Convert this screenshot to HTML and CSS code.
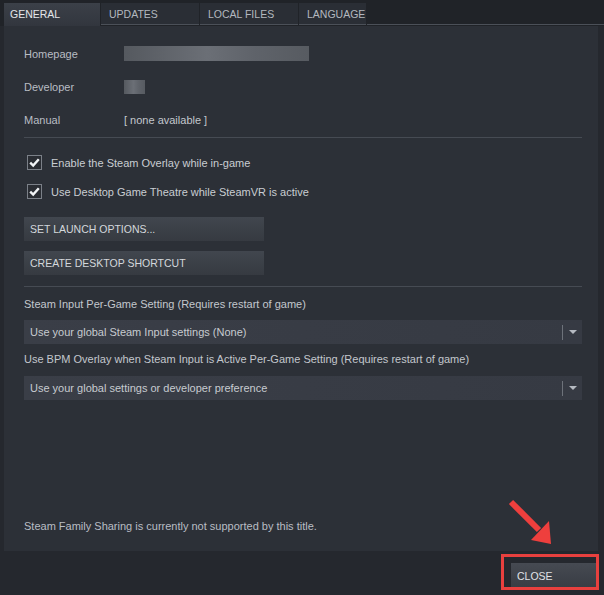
FILE: index.html
```html
<!DOCTYPE html>
<html>
<head>
<meta charset="utf-8">
<link rel="stylesheet" href="styles.css">
</head>
<body>
<div class="tabs">
  <div class="tab active">GENERAL</div>
  <div class="tab">UPDATES</div>
  <div class="tab">LOCAL FILES</div>
  <div class="tab last">LANGUAGE</div>
  <div class="tab-fill"></div>
</div>
<div class="panel">
  <div class="info">
    <div class="row"><span class="label">Homepage</span><span class="blur wide"></span></div>
    <div class="row"><span class="label">Developer</span><span class="blur small"></span></div>
    <div class="row"><span class="label">Manual</span><span class="value">[ none available ]</span></div>
  </div>
  <div class="divider"></div>
  <div class="checks">
    <label class="check"><span class="box"><svg viewBox="0 0 15 15" width="15" height="15"><path d="M3.2 7.6 L6.2 10.6 L11.8 4.2" fill="none" stroke="#f2f4f6" stroke-width="2.4"/></svg></span>Enable the Steam Overlay while in-game</label>
    <label class="check"><span class="box"><svg viewBox="0 0 15 15" width="15" height="15"><path d="M3.2 7.6 L6.2 10.6 L11.8 4.2" fill="none" stroke="#f2f4f6" stroke-width="2.4"/></svg></span>Use Desktop Game Theatre while SteamVR is active</label>
  </div>
  <div class="btn first">SET LAUNCH OPTIONS...</div>
  <div class="btn">CREATE DESKTOP SHORTCUT</div>
  <div class="divider second"></div>
  <div class="setting-label">Steam Input Per-Game Setting (Requires restart of game)</div>
  <div class="dropdown"><span class="dd-text">Use your global Steam Input settings (None)</span><span class="dd-sep"></span><span class="dd-arrow"></span></div>
  <div class="setting-label next">Use BPM Overlay when Steam Input is Active Per-Game Setting (Requires restart of game)</div>
  <div class="dropdown"><span class="dd-text">Use your global settings or developer preference</span><span class="dd-sep"></span><span class="dd-arrow"></span></div>
  <div class="footer-note">Steam Family Sharing is currently not supported by this title.</div>
</div>
<div class="actions">
  <div class="close-btn">CLOSE</div>
</div>
<div class="highlight"></div>
<svg class="arrow" viewBox="0 0 604 595" width="604" height="595">
  <line x1="511" y1="502" x2="539" y2="530" stroke="#ee3f3d" stroke-width="6" stroke-linecap="butt"/>
  <polygon points="531,540 549,521 551,544" fill="#ee3f3d"/>
</svg>
</body>
</html>
```
FILE: styles.css
```css
* { box-sizing: border-box; }
html, body { margin: 0; padding: 0; }
body {
  width: 604px;
  height: 595px;
  background: #25282e;
  font-family: "Liberation Sans", Arial, sans-serif;
  font-size: 11px;
  color: #c3c7cd;
  position: relative;
  overflow: hidden;
}
.tabs {
  display: flex;
  height: 26px;
  padding-left: 4px;
  padding-top: 3px;
  background: #202328;
}
.tab {
  width: 98px;
  height: 22px;
  margin-right: 1px;
  padding-left: 8px;
  line-height: 22px;
  font-size: 10.5px;
  color: #b3b8bf;
  background: #2a2e35;
  border-bottom: 1px solid #4b5058;
}
.tab.active {
  width: 96px;
  height: 23px;
  padding-left: 6px;
  color: #e4e7eb;
  background: linear-gradient(#3b4048, #32363e);
  border-bottom: none;
}
.tab.last { width: 67px; }
.tab-fill {
  flex: 1;
  height: 22px;
  border-bottom: 1px solid #4b5058;
}
.panel {
  margin: 0 6px 0 4px;
  height: 525px;
  background: #2c3037;
  padding: 11px 16px 16px 20px;
  display: flex;
  flex-direction: column;
}
.info { display: flex; flex-direction: column; }
.row {
  height: 33px;
  display: flex;
  align-items: center;
}
.label { width: 100px; color: #b9bdc4; }
.value { color: #c3c7cd; }
.blur {
  display: inline-block;
  background: linear-gradient(90deg, #55595f, #6b6f76 45%, #5f636a 70%, #575b61);
  filter: blur(0.6px);
}
.blur.wide { width: 185px; height: 15px; }
.blur.small { width: 21px; height: 14px; }
.divider {
  height: 1px;
  background: #464b53;
  margin-top: 1px;
}
.divider.second { margin-top: 11px; }
.checks { display: flex; flex-direction: column; margin-top: 10px; }
.check {
  height: 29px;
  display: flex;
  align-items: center;
  color: #c9cdd2;
}
.box {
  width: 15px;
  height: 15px;
  margin-left: 3px;
  margin-right: 9px;
  border: 1px solid #7b8088;
  background: #2a2d33;
  display: flex;
  align-items: center;
  justify-content: center;
}
.box svg { display: block; flex: none; }
.btn {
  width: 240px;
  height: 24px;
  margin-top: 10px;
  padding-left: 6px;
  line-height: 24px;
  font-size: 10.5px;
  color: #d4d8dc;
  background: linear-gradient(#41464e, #363a41);
}
.btn.first { margin-top: 11px; }
.setting-label {
  margin-top: 8px;
  height: 18px;
  line-height: 18px;
  color: #c3c7cd;
}
.setting-label.next { margin-top: 6px; }
.dropdown {
  margin-top: 7px;
  height: 24px;
  width: 558px;
  display: flex;
  align-items: center;
  background: linear-gradient(90deg, #3a3e47, #363a43);
}
.setting-label.next + .dropdown { margin-top: 8px; }
.dd-text { flex: 1; padding-left: 6px; color: #c7cbd0; }
.dd-sep { width: 1px; height: 15px; background: #6d727a; margin-right: 6px; }
.dd-arrow {
  width: 0; height: 0;
  border-left: 4px solid transparent;
  border-right: 4px solid transparent;
  border-top: 4px solid #b5bac1;
  margin-right: 5px;
}
.footer-note {
  margin-top: auto;
  color: #b9bdc4;
  line-height: 18px;
}
.actions {
  display: flex;
  justify-content: flex-end;
  padding: 12px 7px 0 0;
}
.close-btn {
  width: 86px;
  height: 26px;
  padding-left: 6px;
  line-height: 26px;
  font-size: 10.5px;
  color: #e0e3e7;
  background: linear-gradient(#464a52, #383c43);
}
.highlight {
  position: absolute;
  left: 501px;
  top: 554px;
  width: 98px;
  height: 36px;
  border: 3px solid #e8403e;
}
.arrow {
  position: absolute;
  left: 0;
  top: 0;
  pointer-events: none;
}
```
